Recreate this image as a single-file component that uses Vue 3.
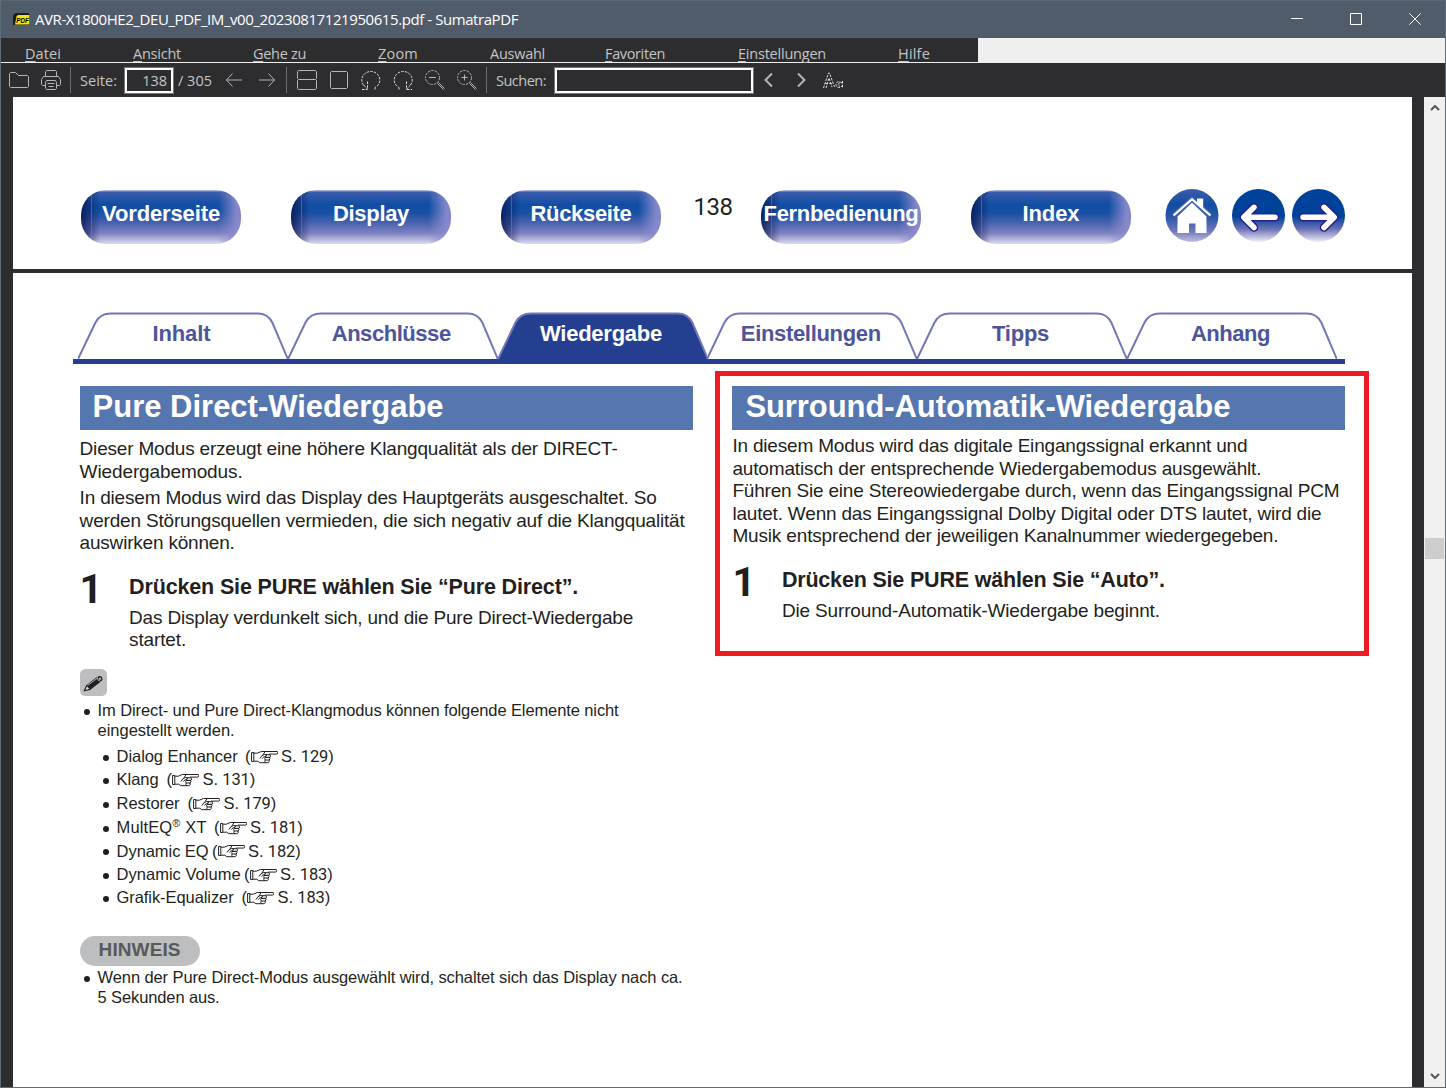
<template>
  <div class="window">

    <header class="titlebar">
      <svg class="app-icon" viewBox="0 0 18 14">
        <path d="M1 13V5q0-4 4-4h11l2 2v10z" fill="#1d1d1b" />
        <path d="M3 12.500L4.500 4.500q.5-1.500 2-1.500h11v9.500z" fill="#f5e60a" />
        <text x="4.300" y="11" font-size="7.500" textLength="12.500" lengthAdjust="spacingAndGlyphs">PDF</text>
      </svg>
      <span class="title" v-fit="483">AVR-X1800HE2_DEU_PDF_IM_v00_20230817121950615.pdf - SumatraPDF</span>
      <div class="caption-buttons">
        <svg viewBox="0 0 12 12"><path d="M0 5.500h12" /></svg>
        <svg viewBox="0 0 12 12"><path d="M.5 .5h11v11h-11z" /></svg>
        <svg viewBox="0 0 12 12"><path d="M.3 .3l11.400 11.400M11.700 .3L.3 11.700" /></svg>
      </div>
    </header>

    <nav class="menubar">
      <div class="menu-items">
        <span v-for="m in menu" :key="m.text">
          <span class="menu-label" v-fit="m.w"><u v-if="m.key">{{ m.text[0] }}</u>{{ m.key ? m.text.slice(1) : m.text }}</span>
        </span>
      </div>
    </nav>

    <div class="toolbar">
      <svg class="ic first" viewBox="0 0 22 22"><path d="M1.500 17.500v-13l1-1h5l3 3h9l1 1v10l-1 1h-17z" /></svg>
      <svg class="ic" viewBox="0 0 22 22">
        <path d="M5.500 7.500v-5l1-1h9l1 1v5M5.500 16.500h-3l-1-1v-5l2-3h15l2 3v5l-1 1h-3M5.500 13.500l1-2h9l1 2v6l-1 1h-9l-1-1zM7.500 14.500h7M8.500 17.500h5" />
      </svg>
      <i class="sep first-sep"></i>
      <span class="label seite" v-fit="37">Seite:</span>
      <div class="box page-box">138</div>
      <span class="label total" v-fit="34">/ 305</span>
      <svg class="ic back" viewBox="0 0 22 22"><path d="M3.500 11h15.500M9.500 4.500l-6 6.500 6 6.500" /></svg>
      <svg class="ic fwd" viewBox="0 0 22 22"><path d="M3 11h15.500M12.500 4.500l6 6.500-6 6.500" /></svg>
      <i class="sep"></i>
      <svg class="ic" viewBox="0 0 22 22"><path d="M1.500 9.500v-7l1-1h17l1 1v7l-1 1h-17zM2.500 10.500l-1 1v8l1 1h17l1-1v-8l-1-1" /></svg>
      <svg class="ic" viewBox="0 0 22 22"><path d="M2.500 3.500l1-1h15l1 1v15l-1 1h-15l-1-1z" /></svg>
      <svg class="ic dotted" viewBox="0 0 22 22"><path d="M3.500 16A9 8.500 0 1 1 15 18.500M7.500 12.500v8M2 20.500h5M3.500 16l4 4M15 18.500v2" /></svg>
      <svg class="ic dotted" viewBox="0 0 22 22"><path d="M18.500 16A9 8.500 0 1 0 7 18.500M14.500 12.500v8M15 20.500h5M18.500 16l-4 4M7 18.500v2" /></svg>
      <svg class="ic" viewBox="0 0 22 22">
        <circle cx="8.500" cy="8.500" r="7" stroke-dasharray="2.500 1" /><path d="M5 8.500h7M13.500 14.500l6 6M14.500 13.500l6 6" />
      </svg>
      <svg class="ic" viewBox="0 0 22 22">
        <circle cx="8.500" cy="8.500" r="7" stroke-dasharray="2.500 1" /><path d="M5.500 8.500h6M8.500 5.500v6M13.500 14.500l6 6M14.500 13.500l6 6" />
      </svg>
      <i class="sep third"></i>
      <span class="label suchen" v-fit="50">Suchen:</span>
      <div class="box search-box"></div>
      <svg class="ic chev prev" viewBox="0 0 22 22"><path d="M14 4.500L7.500 11l6.500 6.500" /></svg>
      <svg class="ic chev" viewBox="0 0 22 22"><path d="M8 4.500l6.500 6.500L8 17.500" /></svg>
      <svg class="ic dotted" viewBox="0 0 22 22">
        <path d="M1.500 19L6.500 4h1l5 14M3.500 14.500h7M4 19L7 9l3 9" />
        <path d="M20.500 12v7M20 14c-5-3-6 0-6 2s3 4 6 1M18 14c-2 0-3 3 0 3" />
      </svg>
    </div>

    <div class="viewer">
      <main class="page">

        <div class="nav">
          <a v-for="b in buttons" :key="b.text" class="pill" :class="b.cls"><span v-fit="b.w">{{ b.text }}</span></a>
          <svg class="round home" viewBox="0 0 54 54">
            <defs>
              <linearGradient id="gHome" x1="0" y1="0" x2="0" y2="1">
                <stop offset="0" stop-color="#3f5cab" /><stop offset=".3" stop-color="#0e4ea3" />
                <stop offset=".55" stop-color="#2d58a8" /><stop offset=".8" stop-color="#7379bb" /><stop offset="1" stop-color="#c3c1e0" />
              </linearGradient>
              <linearGradient id="gArrow" x1="0" y1="0" x2="0" y2="1">
                <stop offset="0" stop-color="#00429a" /><stop offset=".52" stop-color="#00429a" />
                <stop offset=".75" stop-color="#6a6fb5" /><stop offset="1" stop-color="#f0eff8" />
              </linearGradient>
            </defs>
            <circle cx="27" cy="27.500" r="26.500" fill="url(#gHome)" />
            <path d="M27 14.500L41.500 28.500V45H30.500V35.500H24v9.500H12.500V28.500z" fill="#fff" />
            <path d="M8.500 27.500L27 11.200 45.500 27.500" fill="none" stroke="#4a66b0" stroke-width="4.500" />
            <path d="M8.500 27.500L27 11.200 45.500 27.500" fill="none" stroke="#fff" stroke-width="2.200" />
            <path d="M32 10.500h6.200v9.500L32 14.700z" fill="#fff" />
          </svg>
          <svg class="round prev-page" viewBox="0 0 54 54">
            <circle cx="26.500" cy="27.500" r="26.500" fill="url(#gArrow)" />
            <path class="arrow-edge" d="M43 29.300H14M22 19.300L11.800 29.300 22 39.500" />
            <path class="arrow" d="M43 29.300H14M22 19.300L11.800 29.300 22 39.500" />
          </svg>
          <svg class="round next-page" viewBox="0 0 54 54">
            <circle cx="26.500" cy="27.500" r="26.500" fill="url(#gArrow)" />
            <path class="arrow-edge" d="M11 29.300H40M32 19.300L42.200 29.300 32 39.500" />
            <path class="arrow" d="M11 29.300H40M32 19.300L42.200 29.300 32 39.500" />
          </svg>
        </div>

        <div class="rule"></div>

        <div class="tabs">
          <div v-for="t in tabs" :key="t.text" class="tab" :class="{ active: t.active }">
            <svg viewBox="0 0 210 48">
              <path d="M0 47L17.500 10.500Q22 1.500 33 1.500H180Q190 1.500 194.500 10.500L210 47" />
            </svg>
            <span v-fit="t.w">{{ t.text }}</span>
          </div>
        </div>

        <div class="columns">
          <section class="column">
            <h1><span v-fit="351">Pure Direct-Wiedergabe</span></h1>
            <p class="text">
              <span v-for="l in intro" :key="l.t" class="line" v-fit="l.w">{{ l.t }}</span>
            </p>
            <p class="text second">
              <span v-for="l in intro2" :key="l.t" class="line" v-fit="l.w">{{ l.t }}</span>
            </p>
            <div class="step">
              <b class="num">1</b>
              <div>
                <h2><span v-fit="449">Drücken Sie PURE wählen Sie “Pure Direct”.</span></h2>
                <p class="text">
                  <span class="line" v-fit="504">Das Display verdunkelt sich, und die Pure Direct-Wiedergabe</span>
                  <span class="line" v-fit="57">startet.</span>
                </p>
              </div>
            </div>

            <svg class="pencil" viewBox="0 0 27 27">
              <rect width="27" height="27" rx="5.500" fill="#bcbec0" />
              <path d="M3.500 22.500l2.500-6L17 8q4-2.500 5.500 1 .5 2-1.500 3.500L10 21z" fill="#231f20" />
              <path d="M5.500 21l1.300-3.500 2.500 2.200z" fill="#e6e7e8" />
              <path d="M7.500 16.500L18 8.700M17.500 8.500q-.5 3 3 4" stroke="#d1d3d4" stroke-width=".8" fill="none" />
              <circle cx="20" cy="9.700" r="1.300" fill="#a7a9ac" />
            </svg>

            <ul class="notes">
              <li>
                <span class="line" v-fit="521">Im Direct- und Pure Direct-Klangmodus können folgende Elemente nicht</span>
                <span class="line" v-fit="137">eingestellt werden.</span>
              </li>
            </ul>
            <ul class="refs">
              <li v-for="r in refs" :key="r.name" :class="{ reg: r.rest }">
                <span class="name" v-fit="r.w">{{ r.name }}<sup v-if="r.rest">®</sup>{{ r.rest }}</span>
                <span class="ref" :style="{ marginLeft: r.gap + 'px' }">(<svg viewBox="0 0 27 14">
                  <path d="M.6 2.500h2.200v9H.6zM2.800 3.200h3.500l4-1.700h16q1.500 1.500-.5 2.600H18M2.800 11.200h4l2 1.500h8.500M9 8.500q1.500-3.500 4.500-4l2 .3q.5 1.700-2.500 2.200-1 .3-1.500 1.500M14.500 4.700h4.300q1.500 1.400.2 2.700h-5M14.200 7.400q-1 1.200 0 2.600M14.200 7.400H18.500q1.200 1.300-.3 2.600h-4q-1 1.400.3 2.700M18 10q1 1.200-.7 2.700M12 4.900l2-3.200" />
                </svg><span v-fit="52.500">S. <i>{{ r.page }}</i>)</span></span>
              </li>
            </ul>

            <div class="badge"><span v-fit="82">HINWEIS</span></div>
            <ul class="notes after-badge">
              <li>
                <span class="line" v-fit="585">Wenn der Pure Direct-Modus ausgewählt wird, schaltet sich das Display nach ca.</span>
                <span class="line" v-fit="122">5 Sekunden aus.</span>
              </li>
            </ul>
          </section>

          <section class="column framed">
            <h1><span v-fit="485">Surround-Automatik-Wiedergabe</span></h1>
            <p class="text">
              <span v-for="l in surround" :key="l.t" class="line" v-fit="l.w">{{ l.t }}</span>
            </p>
            <div class="step">
              <b class="num">1</b>
              <div>
                <h2><span v-fit="383">Drücken Sie PURE wählen Sie “Auto”.</span></h2>
                <p class="text">
                  <span class="line" v-fit="378">Die Surround-Automatik-Wiedergabe beginnt.</span>
                </p>
              </div>
            </div>
          </section>
        </div>

      </main>

      <div class="scrollbar">
        <svg viewBox="0 0 10 6"><path d="M1 5l4-4 4 4" /></svg>
        <div class="thumb"></div>
        <svg viewBox="0 0 10 6"><path d="M1 1l4 4 4-4" /></svg>
      </div>
    </div>

  </div>
</template>

<script setup>
// spreads the letters so that a line takes exactly the given width
const vFit = {
  mounted(el, { value }) {
    const width = el.getBoundingClientRect().width
    el.style.letterSpacing = (value - width) / el.textContent.length + 'px'
  }
}

const menu = [
  { text: 'Datei', w: 36, key: true },
  { text: 'Ansicht', w: 48, key: true },
  { text: 'Gehe zu', w: 53, key: true },
  { text: 'Zoom', w: 40, key: true },
  { text: 'Auswahl', w: 55 },
  { text: 'Favoriten', w: 60, key: true },
  { text: 'Einstellungen', w: 88, key: true },
  { text: 'Hilfe', w: 32, key: true }
]

const buttons = [
  { text: 'Vorderseite', w: 118 },
  { text: 'Display', w: 76 },
  { text: 'Rückseite', w: 101 },
  { text: '138', w: 39, cls: 'page-no' },
  { text: 'Fernbedienung', w: 155 },
  { text: 'Index', w: 57 }
]

const tabs = [
  { text: 'Inhalt', w: 58 },
  { text: 'Anschlüsse', w: 119 },
  { text: 'Wiedergabe', w: 122, active: true },
  { text: 'Einstellungen', w: 140 },
  { text: 'Tipps', w: 57 },
  { text: 'Anhang', w: 79 }
]

const intro = [
  { t: 'Dieser Modus erzeugt eine höhere Klangqualität als der DIRECT-', w: 538 },
  { t: 'Wiedergabemodus.', w: 163 }
]

const intro2 = [
  { t: 'In diesem Modus wird das Display des Hauptgeräts ausgeschaltet. So', w: 577 },
  { t: 'werden Störungsquellen vermieden, die sich negativ auf die Klangqualität', w: 605 },
  { t: 'auswirken können.', w: 155 }
]

const surround = [
  { t: 'In diesem Modus wird das digitale Eingangssignal erkannt und', w: 515 },
  { t: 'automatisch der entsprechende Wiedergabemodus ausgewählt.', w: 529 },
  { t: 'Führen Sie eine Stereowiedergabe durch, wenn das Eingangssignal PCM', w: 607 },
  { t: 'lautet. Wenn das Eingangssignal Dolby Digital oder DTS lautet, wird die', w: 589 },
  { t: 'Musik entsprechend der jeweiligen Kanalnummer wiedergegeben.', w: 546 }
]

const refs = [
  { name: 'Dialog Enhancer', w: 121, gap: 7.5, page: 129 },
  { name: 'Klang', w: 42, gap: 8, page: 131 },
  { name: 'Restorer', w: 63, gap: 8, page: 179 },
  { name: 'MultEQ', rest: ' XT', w: 90, gap: 7.5, page: 181 },
  { name: 'Dynamic EQ', w: 92, gap: 3.5, page: 182 },
  { name: 'Dynamic Volume', w: 124, gap: 3.5, page: 183 },
  { name: 'Grafik-Equalizer', w: 117, gap: 8, page: 183 }
]
</script>

<style>
body {
  margin: 0;
  overflow: hidden;
}
</style>

<style scoped>
* {
  box-sizing: border-box;
}

.window {
  width: 1446px;
  height: 1088px;
  display: flex;
  flex-direction: column;
  border: 1px solid #5f6b79;
  border-top-color: #5b6775;
  background: #2d2d30;
  font-family: "Open Sans", "Noto Sans", sans-serif;
  font-size: 14.5px;
  overflow: hidden;
}

span {
  white-space: pre;
}

/* title bar */
.titlebar {
  height: 37px;
  flex: none;
  display: flex;
  align-items: center;
  background: #515c6b;
  color: #fff;
}

.app-icon {
  width: 18px;
  height: 14px;
  margin: 0 5px 2px 11px;
  font: italic bold 7px "Liberation Sans", sans-serif;
}

.title {
  padding-bottom: 2px;
  font-size: 15px;
  line-height: 20px;
}

.caption-buttons {
  margin-left: auto;
  display: flex;
  gap: 47px;
  padding: 0 24px 1px 0;
}

.caption-buttons svg {
  width: 12px;
  height: 12px;
  fill: none;
  stroke: #fff;
}

/* menu */
.menubar {
  height: 25px;
  flex: none;
  background: #efefef;
}

.menu-items {
  width: 977px;
  height: 25px;
  display: grid;
  grid-template-columns: 108px 120px 125px 112px 115px 133px 160px 1fr;
  padding: 6px 0 0 24px;
  background: #2d2d30;
  border-bottom: 1px solid #efefef;
  color: #c4c4c4;
  line-height: 20px;
}

.menu-label {
  display: inline-block;
}

u {
  text-underline-offset: 2px;
}

/* toolbar */
.toolbar {
  height: 34px;
  flex: none;
  display: flex;
  align-items: center;
  padding-left: 7px;
  color: #c4c4c4;
}

.ic {
  width: 22px;
  height: 22px;
  margin-right: 10px;
  flex: none;
  fill: none;
  stroke: #b5b5b5;
}

.dotted {
  stroke: #dedede;
  stroke-dasharray: 2.5 1.2;
}

.chev {
  stroke-width: 2;
}

.sep {
  width: 1px;
  height: 26px;
  background: #6c6c6e;
  margin-right: 9px;
}

.first-sep {
  margin-left: -2px;
}

.ic.back {
  margin-left: 11px;
  margin-right: 11px;
}

.ic.fwd {
  margin-right: 8px;
}

.sep.third {
  margin-left: -2px;
}

.box {
  height: 27px;
  border: 1px solid #777;
  outline: 2px solid #fff;
  outline-offset: -3px;
}

.page-box {
  width: 50px;
  margin-left: 7px;
  padding-right: 6px;
  text-align: right;
  line-height: 25px;
}

.total {
  margin-left: 4px;
}

.search-box {
  width: 200px;
  margin: 0 4px 0 8px;
}

/* document */
.viewer {
  flex: 1;
  display: flex;
  justify-content: space-between;
  padding-left: 12px;
}

.page {
  width: 1399px;
  background: #fff;
  color: #231f20;
  font-family: "Liberation Sans", Arial, sans-serif;
  font-size: 19px;
}

.nav {
  height: 172px;
  display: flex;
  align-items: flex-start;
  padding: 93px 0 0 68px;
}

.pill {
  width: 160px;
  height: 54px;
  margin-right: 50px;
  display: flex;
  justify-content: center;
  border-radius: 25px;
  color: #fff;
  font-size: 22px;
  font-weight: bold;
  line-height: 47px;
  background:
    linear-gradient(90deg, transparent 10px, #6d8cc4 10px, transparent 11px),
    linear-gradient(90deg, rgba(8, 20, 80, .8), rgba(8, 30, 100, 0) 12%, rgba(140, 140, 205, 0) 86%, rgba(140, 140, 205, .9) 97%),
    linear-gradient(#c5cce8, #3c5cac 4%, #0f4ea3 28%, #1750a4 42%, #4661ae 60%, #7d82c0 80%, #dcdbee);
}

.pill:nth-child(3) {
  margin-right: 22px;
}

.page-no {
  width: 60px;
  margin-right: 18px;
  background: none;
  color: #231f20;
  font: 24px/34px Roboto, sans-serif;
}

.pill:nth-child(6) {
  margin-right: 34px;
}

.round {
  width: 54px;
  height: 54px;
  margin-top: -2px;
  flex: none;
}

.home {
  margin-right: 13px;
}

.prev-page {
  margin-right: 6px;
}

.arrow,
.arrow-edge {
  fill: none;
  stroke: #fff;
  stroke-width: 5.5;
  stroke-linecap: round;
  stroke-linejoin: round;
}

.arrow-edge {
  stroke: #29208a;
  stroke-width: 8.5;
}

.rule {
  height: 4px;
  background: #2b2e2d;
}

.tabs {
  width: 1272px;
  height: 52px;
  margin: 39px 0 0 60px;
  padding-left: 5px;
  display: flex;
  border-bottom: 5px solid #243f8f;
}

.tab {
  position: relative;
  width: 209.8px;
  height: 47px;
  text-align: center;
  color: #4c5599;
  font-size: 22px;
  font-weight: bold;
  line-height: 43px;
  padding-right: 3px;
}

/* outline of the tab, drawn behind its label */
.tab svg {
  position: absolute;
  left: 0;
  top: 0;
  width: 209.8px;
  height: 48px;
  fill: none;
  stroke: #7277b5;
  stroke-width: 2;
}

.tab span {
  position: relative;
  display: inline-block;
}

.tab.active {
  color: #fff;
}

.tab.active svg {
  fill: #243f8f;
}

.columns {
  display: flex;
  align-items: flex-start;
  padding: 7px 0 0 66.6px;
}

.column {
  width: 613px;
  padding-top: 15px;
}

.framed {
  width: 654px;
  height: 285px;
  margin-left: 22.4px;
  padding: 10px 17px 0 12.4px;
  border: 5px solid #ed1c24;
}

h1 {
  width: 613px;
  height: 44px;
  margin: 0;
  padding-left: 13px;
  background: #5576af;
  color: #fff;
  font-size: 31px;
  line-height: 41px;
}

.text {
  margin: 8px 0 0;
  line-height: 22.5px;
}

.text.second {
  margin-top: 4px;
}

.framed .text {
  margin-top: 5px;
}

.line,
h1 span,
h2 span,
.name,
.ref span,
.badge span,
.pill span,
.label,
.title {
  display: inline-block;
}

.line {
  display: table;
  height: 22.5px;
}

.step {
  display: flex;
  margin-top: 20px;
}

.num {
  width: 49.5px;
  margin-top: -5px;
  font: bold 40px/40px Roboto, sans-serif;
}

h2 {
  margin: 0;
  font-size: 21.5px;
  line-height: 25px;
}

.step .text {
  margin-top: 7px;
}

.framed .step .text {
  margin-top: 7px;
}

.pencil {
  display: block;
  width: 27px;
  height: 27px;
  margin-top: 17.5px;
}

ul {
  margin: 0;
  padding: 0;
  list-style: none;
  font-size: 16.5px;
}

li::before {
  content: "";
  flex: none;
  width: 6px;
  height: 6px;
  border-radius: 50%;
  background: #231f20;
}

.notes {
  margin-top: 3.5px;
  line-height: 20px;
}

.notes .line {
  height: 20px;
}

.notes li {
  display: flow-root;
  padding-left: 18px;
}

.notes li::before {
  display: block;
  margin: 9px 0 -15px -14px;
}

.refs {
  margin-top: 5.6px;
  padding-left: 23px;
}

.refs li {
  display: flex;
  align-items: center;
  height: 23.4px;
  line-height: 23.4px;
}

.refs li::before {
  margin: 2px 8px 0 0;
}

.refs .reg {
  margin-top: 1px;
}

sup {
  font-size: 11px;
  line-height: 0;
  vertical-align: 6px;
}

.ref {
  display: flex;
  align-items: center;
}

.ref svg {
  width: 27px;
  height: 14px;
  margin-right: 3.5px;
  fill: none;
  stroke: #231f20;
  stroke-width: 1;
}

.ref i {
  font-family: Roboto, sans-serif;
  font-style: normal;
}

.badge {
  width: 120px;
  height: 30px;
  margin-top: 26.4px;
  padding-left: 19px;
  border-radius: 15px;
  background: #bcbec0;
  color: #58595b;
  font-size: 19px;
  font-weight: bold;
  line-height: 28px;
}

.after-badge {
  margin-top: 1px;
}

/* scroll bar */
.scrollbar {
  width: 21px;
  display: flex;
  flex-direction: column;
  align-items: center;
  justify-content: space-between;
  padding: 8px 0;
  background: #f0f0f0;
}

.scrollbar svg {
  width: 10px;
  height: 6px;
  fill: none;
  stroke: #555;
  stroke-width: 2;
}

.thumb {
  width: 19px;
  height: 21px;
  margin-top: -88px;
  background: #cdcdcd;
}
</style>
